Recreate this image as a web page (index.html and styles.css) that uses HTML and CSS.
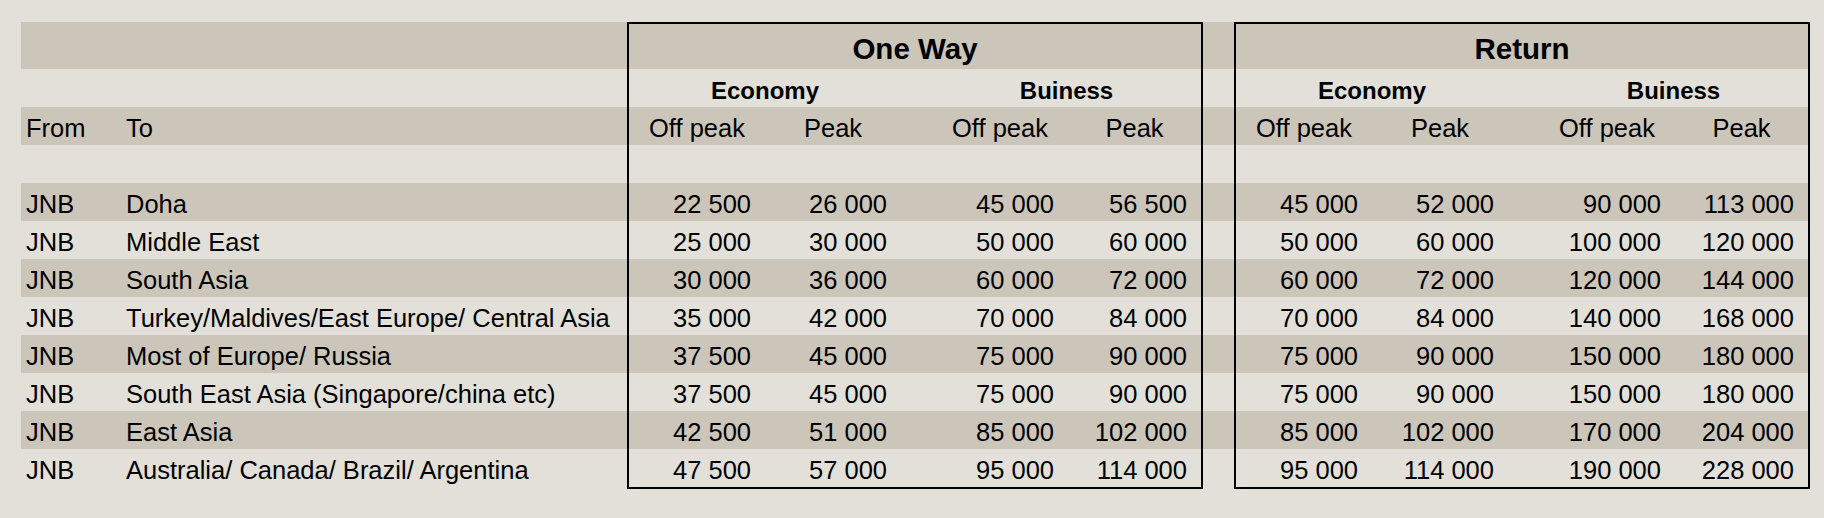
FILE: index.html
```html
<!DOCTYPE html>
<html>
<head>
<meta charset="utf-8">
<link rel="stylesheet" href="styles.css">
</head>
<body>
<div class="sheet">
  <div class="left">
    <div class="row title s"></div>
    <div class="row"></div>
    <div class="row s"><div class="c from">From</div><div class="c to">To</div></div>
    <div class="row"></div>
    <div class="row s"><div class="c from">JNB</div><div class="c to">Doha</div></div>
    <div class="row"><div class="c from">JNB</div><div class="c to">Middle East</div></div>
    <div class="row s"><div class="c from">JNB</div><div class="c to">South Asia</div></div>
    <div class="row"><div class="c from">JNB</div><div class="c to">Turkey/Maldives/East Europe/ Central Asia</div></div>
    <div class="row s"><div class="c from">JNB</div><div class="c to">Most of Europe/ Russia</div></div>
    <div class="row"><div class="c from">JNB</div><div class="c to">South East Asia (Singapore/china etc)</div></div>
    <div class="row s"><div class="c from">JNB</div><div class="c to">East Asia</div></div>
    <div class="row"><div class="c from">JNB</div><div class="c to">Australia/ Canada/ Brazil/ Argentina</div></div>
  </div>

  <div class="box">
    <div class="row boxtitle s"><div class="c head">One Way</div></div>
    <div class="row"><div class="c sub span">Economy</div><div class="c sp"></div><div class="c sub span2">Buiness</div></div>
    <div class="row s"><div class="c w1 ctr">Off peak</div><div class="c w2 ctr">Peak</div><div class="c sp"></div><div class="c w4 ctr">Off peak</div><div class="c w5 ctr">Peak</div></div>
    <div class="row"></div>
    <div class="row s"><div class="c w1 num">22&nbsp;500</div><div class="c w2 num">26&nbsp;000</div><div class="c sp"></div><div class="c w4 num">45&nbsp;000</div><div class="c w5 num">56&nbsp;500</div></div>
    <div class="row"><div class="c w1 num">25&nbsp;000</div><div class="c w2 num">30&nbsp;000</div><div class="c sp"></div><div class="c w4 num">50&nbsp;000</div><div class="c w5 num">60&nbsp;000</div></div>
    <div class="row s"><div class="c w1 num">30&nbsp;000</div><div class="c w2 num">36&nbsp;000</div><div class="c sp"></div><div class="c w4 num">60&nbsp;000</div><div class="c w5 num">72&nbsp;000</div></div>
    <div class="row"><div class="c w1 num">35&nbsp;000</div><div class="c w2 num">42&nbsp;000</div><div class="c sp"></div><div class="c w4 num">70&nbsp;000</div><div class="c w5 num">84&nbsp;000</div></div>
    <div class="row s"><div class="c w1 num">37&nbsp;500</div><div class="c w2 num">45&nbsp;000</div><div class="c sp"></div><div class="c w4 num">75&nbsp;000</div><div class="c w5 num">90&nbsp;000</div></div>
    <div class="row"><div class="c w1 num">37&nbsp;500</div><div class="c w2 num">45&nbsp;000</div><div class="c sp"></div><div class="c w4 num">75&nbsp;000</div><div class="c w5 num">90&nbsp;000</div></div>
    <div class="row s"><div class="c w1 num">42&nbsp;500</div><div class="c w2 num">51&nbsp;000</div><div class="c sp"></div><div class="c w4 num">85&nbsp;000</div><div class="c w5 num">102&nbsp;000</div></div>
    <div class="row"><div class="c w1 num">47&nbsp;500</div><div class="c w2 num">57&nbsp;000</div><div class="c sp"></div><div class="c w4 num">95&nbsp;000</div><div class="c w5 num">114&nbsp;000</div></div>
  </div>

  <div class="gap">
    <div class="row title s"></div>
    <div class="row"></div>
    <div class="row s"></div>
    <div class="row"></div>
    <div class="row s"></div>
    <div class="row"></div>
    <div class="row s"></div>
    <div class="row"></div>
    <div class="row s"></div>
    <div class="row"></div>
    <div class="row s"></div>
    <div class="row"></div>
  </div>

  <div class="box">
    <div class="row boxtitle s"><div class="c head">Return</div></div>
    <div class="row"><div class="c sub span">Economy</div><div class="c sp"></div><div class="c sub span2">Buiness</div></div>
    <div class="row s"><div class="c w1 ctr">Off peak</div><div class="c w2 ctr">Peak</div><div class="c sp"></div><div class="c w4 ctr">Off peak</div><div class="c w5 ctr">Peak</div></div>
    <div class="row"></div>
    <div class="row s"><div class="c w1 num">45&nbsp;000</div><div class="c w2 num">52&nbsp;000</div><div class="c sp"></div><div class="c w4 num">90&nbsp;000</div><div class="c w5 num">113&nbsp;000</div></div>
    <div class="row"><div class="c w1 num">50&nbsp;000</div><div class="c w2 num">60&nbsp;000</div><div class="c sp"></div><div class="c w4 num">100&nbsp;000</div><div class="c w5 num">120&nbsp;000</div></div>
    <div class="row s"><div class="c w1 num">60&nbsp;000</div><div class="c w2 num">72&nbsp;000</div><div class="c sp"></div><div class="c w4 num">120&nbsp;000</div><div class="c w5 num">144&nbsp;000</div></div>
    <div class="row"><div class="c w1 num">70&nbsp;000</div><div class="c w2 num">84&nbsp;000</div><div class="c sp"></div><div class="c w4 num">140&nbsp;000</div><div class="c w5 num">168&nbsp;000</div></div>
    <div class="row s"><div class="c w1 num">75&nbsp;000</div><div class="c w2 num">90&nbsp;000</div><div class="c sp"></div><div class="c w4 num">150&nbsp;000</div><div class="c w5 num">180&nbsp;000</div></div>
    <div class="row"><div class="c w1 num">75&nbsp;000</div><div class="c w2 num">90&nbsp;000</div><div class="c sp"></div><div class="c w4 num">150&nbsp;000</div><div class="c w5 num">180&nbsp;000</div></div>
    <div class="row s"><div class="c w1 num">85&nbsp;000</div><div class="c w2 num">102&nbsp;000</div><div class="c sp"></div><div class="c w4 num">170&nbsp;000</div><div class="c w5 num">204&nbsp;000</div></div>
    <div class="row"><div class="c w1 num">95&nbsp;000</div><div class="c w2 num">114&nbsp;000</div><div class="c sp"></div><div class="c w4 num">190&nbsp;000</div><div class="c w5 num">228&nbsp;000</div></div>
  </div>
</div>
</body>
</html>
```

FILE: styles.css
```css
html, body {
  margin: 0;
  padding: 0;
  background: #e2e0d8;
}

body {
  font-family: "Liberation Sans", Arial, sans-serif;
  font-size: 25.5px;
  color: #000;
}

.sheet {
  display: flex;
  align-items: flex-start;
  margin: 22px 0 0 21px;
}

.left {
  width: 606px;
}

.gap {
  width: 31px;
}

.box {
  width: 572px;
  border: 2px solid #000;
}

.row {
  display: flex;
  height: 38px;
  white-space: nowrap;
}

.row.s {
  background: #ccc5b9;
}

.row.title {
  height: 47px;
}

.row.boxtitle {
  height: 45px;
}

.c {
  box-sizing: border-box;
  height: 38px;
  padding-top: 5px;
  line-height: 33px;
}

.from {
  width: 100px;
  padding-left: 5px;
}

.to {
  width: 506px;
  padding-left: 5px;
}

.head {
  width: 100%;
  height: 45px;
  text-align: center;
  font-weight: bold;
  font-size: 29.5px;
  padding-top: 5px;
  line-height: 40px;
}

.sub {
  text-align: center;
  font-weight: bold;
  font-size: 24px;
  padding-top: 6px;
  line-height: 32px;
}

.span {
  width: 272px;
}

.span2 {
  width: 269px;
}

.sp {
  width: 31px;
}

.w1, .w2, .w4 {
  width: 136px;
}

.w5 {
  width: 133px;
}

.ctr {
  text-align: center;
}

.num {
  text-align: right;
  padding-right: 14px;
}
```
